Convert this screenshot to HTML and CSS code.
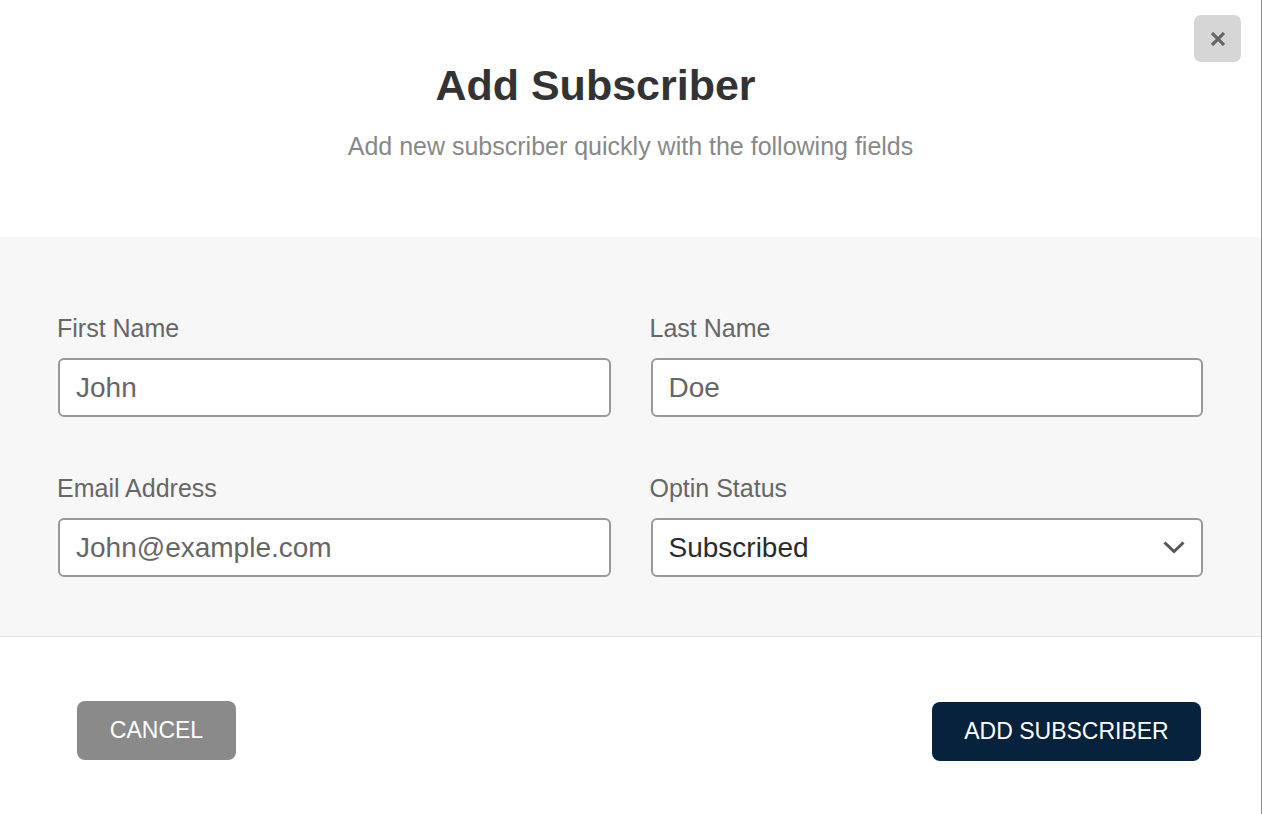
FILE: index.html
```html
<!DOCTYPE html>
<html lang="en">
<head>
<meta charset="utf-8">
<title>Add Subscriber</title>
<link rel="stylesheet" href="styles.css">
</head>
<body>
<div class="modal">
  <button class="close" aria-label="Close">
    <svg width="14" height="14" viewBox="0 0 14 14"><path d="M1 1 L13 13 M13 1 L1 13" stroke="#666" stroke-width="3.2" stroke-linecap="butt"/></svg>
  </button>
  <header class="modal-header">
    <h1 class="title">Add Subscriber</h1>
    <p class="subtitle">Add new subscriber quickly with the following fields</p>
  </header>
  <section class="modal-body">
    <div class="grid">
      <div class="field">
        <label class="label">First Name</label>
        <div class="input"><span class="value">John</span></div>
      </div>
      <div class="field">
        <label class="label">Last Name</label>
        <div class="input"><span class="value">Doe</span></div>
      </div>
      <div class="field">
        <label class="label">Email Address</label>
        <div class="input"><span class="value">John@example.com</span></div>
      </div>
      <div class="field">
        <label class="label">Optin Status</label>
        <div class="input select"><span class="value dark">Subscribed</span>
          <svg class="chevron" width="22" height="13" viewBox="0 0 22 13"><path d="M1.5 1.5 L11 10.5 L20.5 1.5" fill="none" stroke="#555" stroke-width="3"/></svg>
        </div>
      </div>
    </div>
  </section>
  <footer class="modal-footer">
    <button class="btn btn-cancel">CANCEL</button>
    <button class="btn btn-primary">ADD SUBSCRIBER</button>
  </footer>
</div>
</body>
</html>
```
FILE: styles.css
```css
* { box-sizing: border-box; }
html, body { margin: 0; padding: 0; background: #fff; }
body { font-family: "Liberation Sans", Arial, Helvetica, sans-serif; }

.modal {
  position: relative;
  width: 1262px;
  height: 814px;
  border-right: 1px solid #8c8c8c;
  background: #fff;
}

.close {
  position: absolute;
  top: 15px;
  right: 20px;
  width: 47px;
  height: 47px;
  border: none;
  border-radius: 7px;
  background: #d6d6d6;
  display: flex;
  align-items: center;
  justify-content: center;
  padding: 0;
}

.modal-header {
  height: 237px;
  padding-top: 60px;
  text-align: center;
}
.title {
  margin: 0;
  font-size: 43px;
  line-height: 50px;
  font-weight: bold;
  color: #333;
  padding-right: 70px;
}
.subtitle {
  margin: 22px 0 0;
  font-size: 25px;
  line-height: 29px;
  color: #888;
}

.modal-body {
  background: #f7f7f7;
  border-bottom: 1px solid #e3e3e3;
  padding: 77px 58px 59px;
}
.grid {
  display: grid;
  grid-template-columns: 1fr 1fr;
  column-gap: 40px;
  row-gap: 57px;
}
.field { display: flex; flex-direction: column; }
.label {
  font-size: 25px;
  line-height: 28px;
  color: #666;
  margin-left: -1px;
  margin-bottom: 16px;
}
.input {
  height: 59px;
  border: 2px solid #999;
  border-radius: 6px;
  background: #fff;
  display: flex;
  align-items: center;
  padding: 0 16px;
}
.value {
  font-size: 28px;
  color: #666;
}
.value.dark { color: #2b2b2b; }
.select { justify-content: space-between; }

.modal-footer {
  display: flex;
  justify-content: space-between;
  align-items: flex-start;
  padding: 64px 60px 0 77px;
}
.btn {
  font-family: "Liberation Sans", Arial, Helvetica, sans-serif;
  font-size: 23px;
  color: #fff;
  border: none;
  border-radius: 8px;
  height: 59px;
  padding: 0 30px;
}
.btn-cancel { background: #8a8a8a; width: 159px; }
.btn-primary { background: #07223c; width: 269px; margin-top: 1px; }
```
